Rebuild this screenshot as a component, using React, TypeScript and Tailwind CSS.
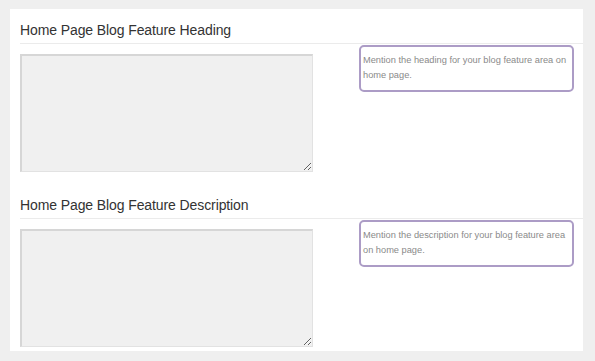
const fields = [
    {
        label: 'Home Page Blog Feature Heading',
        hint: 'Mention the heading for your blog feature area on home page.',
    },
    {
        label: 'Home Page Blog Feature Description',
        hint: 'Mention the description for your blog feature area on home page.',
    },
];

function OptionField({ label, hint, first }: { label: string; hint: string; first: boolean }) {
    return (
        <div className={first ? '' : 'mt-[23px]'}>
            <h3 className="ml-[10px] border-b border-[#ebebeb] pb-[3px] text-[14px] leading-[20px] tracking-[-0.1px] font-normal text-[#333333]">
                {label}
            </h3>
            <div className="flex items-start pl-[10px]">
                <textarea
                    className="mt-[10px] block h-[118px] w-[293px] resize border-t-2 border-l-2 border-r border-b border-t-[#d6d6d6] border-l-[#d6d6d6] border-r-[#e2e2e2] border-b-[#e2e2e2] bg-[#f0f0f0] outline-none"
                />
                <div className="mt-px ml-[46px] h-[47px] w-[215px] rounded-[5px] border-2 border-[#ac9cc6] px-[2px] pt-[6px] text-[9.25px] leading-[15px] text-[#8a8a8a]">
                    {hint}
                </div>
            </div>
        </div>
    );
}

export default function App() {
    return (
        <div className="h-[361px] w-[595px] bg-[#efefef] pt-[9px] pl-[10px] [font-family:'Liberation_Sans',Arial,sans-serif]">
            <div className="w-[573px] bg-white pt-[11px] pb-[4px]">
                {fields.map((f, i) => (
                    <OptionField key={f.label} label={f.label} hint={f.hint} first={i === 0} />
                ))}
            </div>
        </div>
    );
}
